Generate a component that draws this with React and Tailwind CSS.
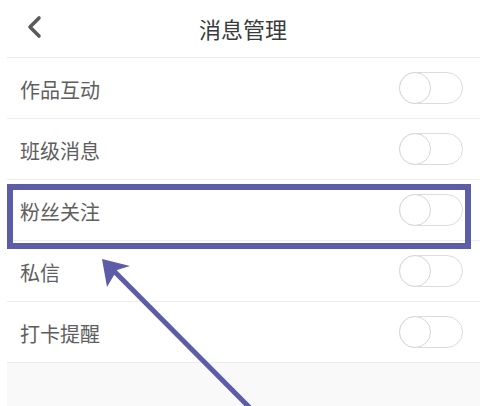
import React from "react";

const rows = ["作品互动", "班级消息", "粉丝关注", "私信", "打卡提醒"];

function Toggle() {
  return (
    <div className="relative w-[64px] h-[32px] rounded-full border border-[#dcdcdc] bg-white">
      <div className="absolute left-[-1px] top-[-1px] w-[32px] h-[32px] rounded-full border border-[#d6d6d6] bg-white" />
    </div>
  );
}

export default function App() {
  return (
    <div
      className="relative w-[486px] h-[406px] overflow-hidden bg-white"
      style={{ fontFamily: '"Noto Sans CJK SC", "Noto Sans", sans-serif' }}
    >
      <div className="relative h-[57px] flex items-center justify-center">
        <svg className="absolute left-[24px] top-[14px]" width="22" height="26" viewBox="0 0 22 26">
          <path d="M15 4 L6 13 L15 22" fill="none" stroke="#5a5a5a" strokeWidth="3.6" strokeLinecap="round" strokeLinejoin="round" />
        </svg>
        <span className="text-[22px] text-[#3a3a3a] leading-none mt-[-1px]">消息管理</span>
      </div>
      <div className="ml-[7px] mr-[6px] h-px bg-[#ebebeb]" />
      {rows.map((r) => (
        <div key={r}>
          <div className="h-[60px] flex items-center justify-between pl-[20px] pr-[23px]">
            <span className="text-[20px] text-[#5e5e5e] leading-none mt-[3px]">{r}</span>
            <Toggle />
          </div>
          <div className="ml-[7px] mr-[6px] h-px bg-[#ededed]" />
        </div>
      ))}
      <div className="h-[60px] bg-[#f9f9f9] ml-[7px] mr-[6px]" />

      <div className="absolute left-[7px] top-[184px] w-[464px] h-[65px] border-[6px] border-[#5c5ca8]" />
      <svg className="absolute left-0 top-0" width="486" height="406" viewBox="0 0 486 406">
        <line x1="110" y1="267" x2="252" y2="410" stroke="#5c5ca8" strokeWidth="5" />
        <path d="M102 259 L130 266 L117 270 L107 287 Z" fill="#5c5ca8" />
      </svg>
    </div>
  );
}
